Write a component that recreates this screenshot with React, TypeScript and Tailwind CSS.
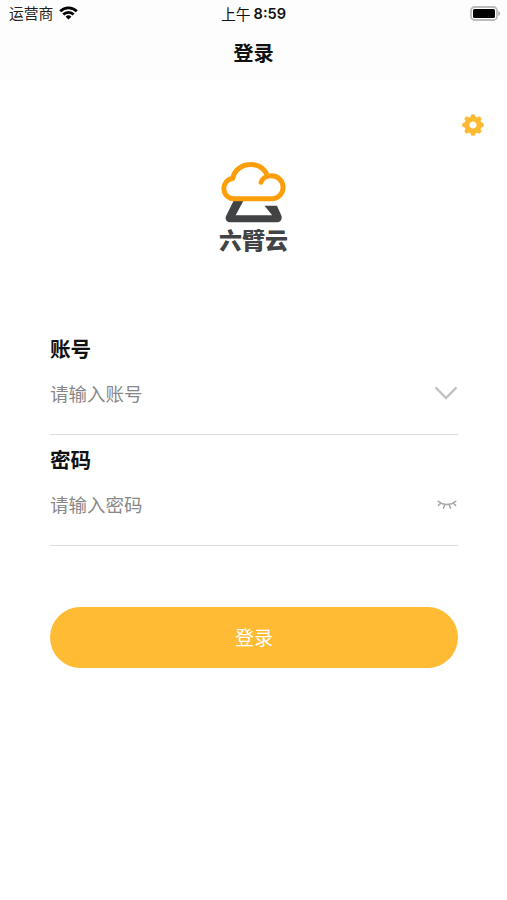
import type { ReactNode } from "react";

function StatusBar() {
  return (
    <div className="grid h-7 grid-cols-3 items-center pl-[9px] pr-[6px]">
      <div className="flex items-center gap-[6px] pb-0.5">
        <span className="text-[14.8px] leading-[26px] text-[#222]">运营商</span>
        <svg width="19" height="14" viewBox="0 0 19 14" fill="none" stroke="#000" strokeWidth="2.8">
          <path d="M1.2 5.2a11.8 11.8 0 0 1 16.6 0" />
          <path d="M4.3 8.5a7.4 7.4 0 0 1 10.4 0" />
          <path d="M9.5 13.6 6.6 10.8a4.1 4.1 0 0 1 5.8 0z" fill="#000" stroke="none" />
        </svg>
      </div>
      <div className="flex items-center justify-center gap-[3px] pr-[3px] text-[14.8px] leading-7 text-[#111]">
        <span>上午</span>
        <span className="font-['Inter','Noto_Sans_CJK_SC',sans-serif] text-[14.6px] font-semibold">8:59</span>
      </div>
      <svg className="mb-0.5 justify-self-end" width="31" height="15" viewBox="0 0 31 15">
        <rect x="1" y="1" width="26" height="13" rx="3.5" fill="#fff" stroke="#bbb" strokeWidth="1.8" />
        <rect x="3" y="3" width="22" height="9" rx="1.5" fill="#000" />
        <path d="M28.3 5v5c2.4-1 2.4-4 0-5z" fill="#aaa" />
      </svg>
    </div>
  );
}

function GearIcon() {
  const angles = [0, 45, 90, 135, 180, 225, 270, 315];
  return (
    <svg width="22" height="22" viewBox="-11 -11 22 22">
      <g fill="#fdb932">
        {angles.map((a) => (
          <rect key={a} x="-2.2" y="-10.8" width="4.4" height="5" rx="1.6" transform={`rotate(${a})`} />
        ))}
      </g>
      <circle r="6.2" fill="none" stroke="#fdb932" strokeWidth="5.2" />
    </svg>
  );
}

function Logo() {
  return (
    <div className="flex flex-col items-center">
      <svg width="70" height="64" viewBox="219 160 70 64" fill="none">
        <path
          d="M233.5 201h9.8l-7.6 14.3h36.5l-7.7-9.6H277l4.3 9.8c1.4 3.8-.8 6.8-4.2 6.8h-47c-3.7 0-5.6-3.6-3.8-6.9z"
          fill="#414345"
        />
        <path
          d="M261 182.3c1.1-3.7 5.4-6.5 10.6-6.5a11.5 11.5 0 0 1 0 23H233.6a10.3 10.3 0 0 1-.8-20.5c1.2-7.8 8.7-13.8 18.2-13.8 7.6 0 13.5 4.3 16.4 11"
          fill="#fff"
          stroke="#fc9d0a"
          strokeWidth="4.9"
          strokeLinecap="round"
          strokeLinejoin="round"
        />
      </svg>
      <span className="mb-px mt-0.5 text-[23px] font-black leading-[26px] text-[#414345]">六臂云</span>
    </div>
  );
}

function ChevronDown() {
  return (
    <svg className="mb-0.5" width="24" height="14" viewBox="0 0 24 14" fill="none" stroke="#c3c3c3" strokeWidth="2.4">
      <path d="M1.5 1.3 12 12 22.5 1.3" />
    </svg>
  );
}

function ClosedEye() {
  return (
    <svg
      className="mr-px"
      width="20"
      height="10"
      viewBox="0 0 20 10"
      fill="none"
      stroke="#a8a8a8"
      strokeWidth="1.5"
      strokeLinecap="round"
    >
      <path d="M1.2 1.2c5.2 4.5 12.4 4.5 17.6 0M3.8 3.3 1.4 5.4M7.7 4.7 6.5 8.3M12.3 4.7l1.2 3.6M16.2 3.3l2.4 2.1" />
    </svg>
  );
}

function Field({ label, placeholder, icon }: { label: string; placeholder: string; icon: ReactNode }) {
  return (
    <div className="flex h-[111px] flex-col border-b border-[#dcdcdc]">
      <span className="mt-[9px] text-[20.6px] font-bold leading-[30px] text-[#111]">{label}</span>
      <div className="mt-[10px] flex h-[42px] items-center justify-between">
        <span className="text-[18.5px] text-[#888]">{placeholder}</span>
        {icon}
      </div>
    </div>
  );
}

export default function App() {
  return (
    <div className="flex h-[900px] w-[507px] flex-col bg-white font-['Noto_Sans_CJK_SC',sans-serif]">
      <header className="h-20 bg-[#fdfdfd]">
        <StatusBar />
        <h1 className="mt-[9px] text-center text-[20.3px] font-bold leading-[30px] text-[#111]">登录</h1>
      </header>

      <div className="flex justify-end pr-[23px] pt-[34px]">
        <button aria-label="设置">
          <GearIcon />
        </button>
      </div>

      <div className="mt-6 flex justify-center">
        <Logo />
      </div>

      <main className="mt-[71px] flex flex-col pl-[50px] pr-[49px]">
        <Field label="账号" placeholder="请输入账号" icon={<ChevronDown />} />
        <Field label="密码" placeholder="请输入密码" icon={<ClosedEye />} />
        <button className="mt-[61px] h-[61px] rounded-full bg-[#febb33] text-[19px] text-white">登录</button>
      </main>
    </div>
  );
}
